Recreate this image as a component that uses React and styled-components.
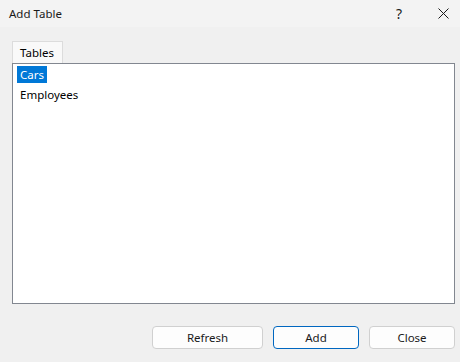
import React, { useState } from "react";
import styled, { createGlobalStyle } from "styled-components";

const tables = ["Cars", "Employees"];

const AddTable = () => {
  const [selected, setSelected] = useState(0);

  return (
    <>
      <GlobalStyle />
      <Window>
        <TitleBar>
          <Title>Add Table</Title>
          <Caption>
            <HelpButton>?</HelpButton>
            <CloseIcon>
              <svg width="11" height="11" viewBox="0 0 11 11">
                <path
                  d="M0.5 0.5 L10.5 10.5 M10.5 0.5 L0.5 10.5"
                  stroke="#1a1a1a"
                  strokeWidth="1"
                  fill="none"
                />
              </svg>
            </CloseIcon>
          </Caption>
        </TitleBar>
        <Body>
          <TabStrip>
            <Tab>Tables</Tab>
          </TabStrip>
          <ListBox>
            {tables.map((name, i) => (
              <Item key={name}>
                <ItemText active={i === selected} onClick={() => setSelected(i)}>
                  {name}
                </ItemText>
              </Item>
            ))}
          </ListBox>
          <Footer>
            <Button wide>Refresh</Button>
            <Button primary>Add</Button>
            <Button>Close</Button>
          </Footer>
        </Body>
      </Window>
    </>
  );
};

export default AddTable;

const GlobalStyle = createGlobalStyle`
  html, body {
    margin: 0;
    padding: 0;
    background: #f0f0f0;
  }
  body {
    font-family: "Noto Sans", "Open Sans", sans-serif;
    font-size: 11.5px;
    color: #000;
  }
`;

const Window = styled.div`
  width: 460px;
  height: 362px;
  display: flex;
  flex-direction: column;
  background: #f0f0f0;
  overflow: hidden;
`;

const TitleBar = styled.div`
  height: 27px;
  flex: none;
  display: flex;
  align-items: center;
  justify-content: space-between;
  background: #f3f3f3;
  padding-left: 9px;
`;

const Title = styled.div`
  font-size: 11.5px;
  color: #1a1a1a;
  margin-top: -1px;
`;

const Caption = styled.div`
  display: flex;
  align-items: center;
  gap: 36px;
  padding-right: 11px;
`;

const HelpButton = styled.span`
  font-size: 14px;
  color: #1a1a1a;
  line-height: 1;
`;

const CloseIcon = styled.span`
  display: flex;
  align-items: center;
  width: 11px;
  height: 11px;
`;

const Body = styled.div`
  flex: 1;
  display: flex;
  flex-direction: column;
  padding: 14px 5px 13px 12px;
  min-height: 0;
`;

const TabStrip = styled.div`
  display: flex;
  height: 22px;
`;

const Tab = styled.div`
  width: 51px;
  box-sizing: border-box;
  border: 1px solid #dcdcdc;
  border-bottom: none;
  background: #f9f9f9;
  padding-left: 7px;
  line-height: 21px;
  font-size: 11.5px;
`;

const ListBox = styled.div`
  height: 241px;
  box-sizing: border-box;
  border: 1px solid #828790;
  background: #fff;
  padding: 0 4px;
  display: flex;
  flex-direction: column;
`;

const Item = styled.div`
  height: 20px;
  display: flex;
  align-items: center;
`;

const ItemText = styled.span`
  padding: 0 3px;
  line-height: 17px;
  background: ${(p) => (p.active ? "#0078d7" : "transparent")};
  color: ${(p) => (p.active ? "#fff" : "#000")};
  cursor: default;
`;

const Footer = styled.div`
  margin-top: auto;
  display: flex;
  justify-content: flex-end;
  gap: 10px;
`;

const Button = styled.button`
  width: ${(p) => (p.wide ? "111px" : "86px")};
  height: 23px;
  box-sizing: border-box;
  border: 1px solid ${(p) => (p.primary ? "#0067c0" : "#d0d0d0")};
  border-radius: 4px;
  background: #fdfdfd;
  font-family: "Noto Sans", "Open Sans", sans-serif;
  font-size: 11.5px;
  color: #1a1a1a;
  padding: 0;
`;
